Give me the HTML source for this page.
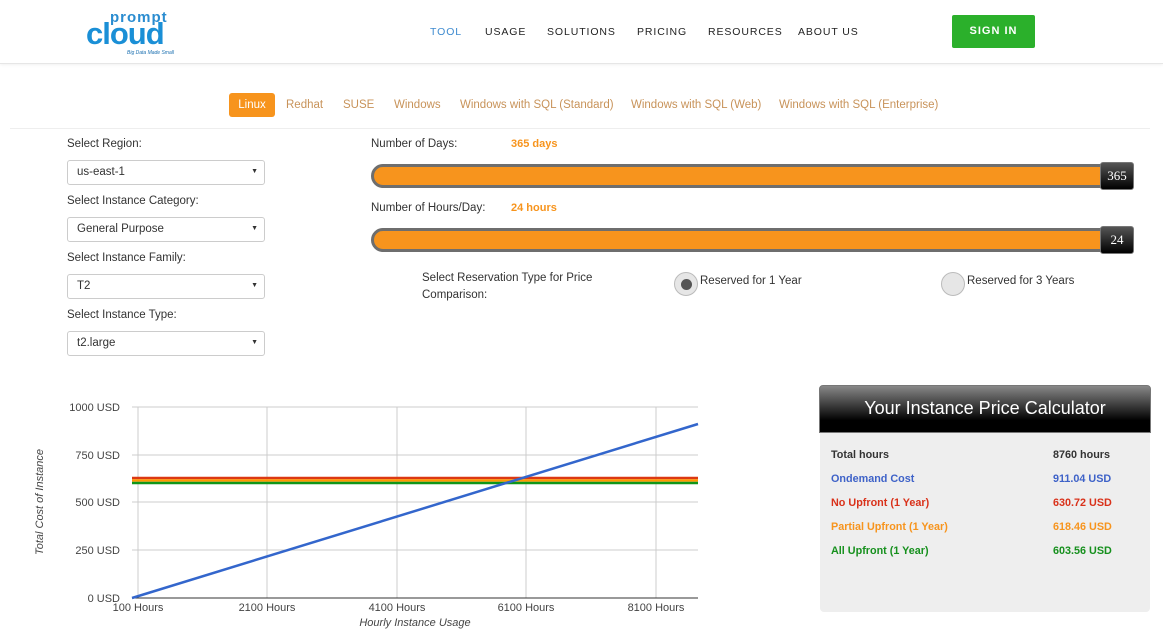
<!DOCTYPE html>
<html><head><meta charset="utf-8"><style>
*{box-sizing:border-box;margin:0;padding:0}
body{width:1163px;height:632px;overflow:hidden;background:#fff;font-family:"Liberation Sans",Arial,sans-serif;position:relative;color:#333}
.a{position:absolute;white-space:nowrap}
.hdr{position:absolute;left:0;top:0;width:1163px;height:64px;border-bottom:1px solid #e6e6e6;box-shadow:0 1px 3px rgba(0,0,0,.06)}
.nav{font-size:10.5px;letter-spacing:0.9px;top:26px;color:#222}
.tab{font-size:11.5px;color:#c8935a;top:99px}
.lbl{font-size:11.5px;color:#333}
.sel{position:absolute;left:67px;width:198px;height:25px;border:1px solid #ccc;border-radius:3px;font-size:11.5px;padding:5px 9px;color:#333}
.sel:after{content:"▼";position:absolute;right:6px;top:7px;font-size:7px;color:#333}
.bar{position:absolute;left:371px;width:733px;height:24px;background:#f7941d;border:3px solid #6e6e6e;border-radius:12px 0 0 12px}
.knob{position:absolute;left:1100px;height:28px;width:34px;background:linear-gradient(#555,#000);border:1px solid #777;border-radius:3px;color:#fff;font-family:"Liberation Serif",serif;font-size:13px;text-align:center;line-height:26px}
.radio{position:absolute;width:24px;height:24px;border-radius:50%;background:#e6e6e6;border:1px solid #bbb}
.row{position:absolute;font-size:10.8px;font-weight:bold}
</style></head><body>
<div class="hdr"></div>
<div class="a" style="left:110px;top:9px;font-size:15px;color:#2a8cd0;font-weight:bold;letter-spacing:1px">prompt</div>
<div class="a" style="left:86px;top:16px;font-size:31px;color:#1a8fd6;font-weight:bold;letter-spacing:-1px">cloud</div>
<div class="a" style="left:127px;top:50px;font-size:5px;color:#1a6fb0;font-style:italic">Big Data Made Small</div>
<div class="a nav" style="left:430px;color:#3e8bd0">TOOL</div>
<div class="a nav" style="left:485px">USAGE</div>
<div class="a nav" style="left:547px">SOLUTIONS</div>
<div class="a nav" style="left:637px">PRICING</div>
<div class="a nav" style="left:708px">RESOURCES</div>
<div class="a nav" style="left:798px">ABOUT US</div>
<div class="a" style="left:952px;top:15px;width:83px;height:33px;background:#2bb02b;border-radius:2px;color:#fff;font-size:11px;font-weight:bold;letter-spacing:1px;text-align:center;line-height:33px">SIGN IN</div>

<div class="a" style="left:229px;top:93px;width:46px;height:24px;background:#f7941d;border-radius:3px;color:#fff;font-size:11.5px;text-align:center;line-height:24px">Linux</div>
<div class="a tab" style="left:286px">Redhat</div>
<div class="a tab" style="left:343px">SUSE</div>
<div class="a tab" style="left:394px">Windows</div>
<div class="a tab" style="left:460px">Windows with SQL (Standard)</div>
<div class="a tab" style="left:631px">Windows with SQL (Web)</div>
<div class="a tab" style="left:779px">Windows with SQL (Enterprise)</div>
<div class="a" style="left:10px;top:128px;width:1140px;border-top:1px solid #eee"></div>

<div class="a lbl" style="left:67px;top:138px">Select Region:</div>
<div class="sel" style="top:160px">us-east-1</div>
<div class="a lbl" style="left:67px;top:195px">Select Instance Category:</div>
<div class="sel" style="top:217px">General Purpose</div>
<div class="a lbl" style="left:67px;top:252px">Select Instance Family:</div>
<div class="sel" style="top:274px">T2</div>
<div class="a lbl" style="left:67px;top:309px">Select Instance Type:</div>
<div class="sel" style="top:331px">t2.large</div>

<div class="a lbl" style="left:371px;top:138px">Number of Days:</div>
<div class="a" style="left:511px;top:138px;font-size:11px;font-weight:bold;color:#f7941d">365 days</div>
<div class="bar" style="top:164px"></div><div class="knob" style="top:162px">365</div>
<div class="a lbl" style="left:371px;top:202px">Number of Hours/Day:</div>
<div class="a" style="left:511px;top:202px;font-size:11px;font-weight:bold;color:#f7941d">24 hours</div>
<div class="bar" style="top:228px"></div><div class="knob" style="top:226px">24</div>
<div class="a lbl" style="left:422px;top:270px;line-height:17px">Select Reservation Type for Price<br>Comparison:</div>
<div class="radio" style="left:674px;top:272px"><div style="position:absolute;left:6px;top:6px;width:11px;height:11px;border-radius:50%;background:#555"></div></div>
<div class="a lbl" style="left:700px;top:275px">Reserved for 1 Year</div>
<div class="radio" style="left:941px;top:272px"></div>
<div class="a lbl" style="left:967px;top:275px">Reserved for 3 Years</div>

<svg class="a" style="left:0;top:390px" width="720" height="242" font-family="Liberation Sans,Arial,sans-serif" font-size="11" fill="#444">
<g stroke="#ccc" stroke-width="1">
<line x1="132" y1="17" x2="698" y2="17"/><line x1="132" y1="65" x2="698" y2="65"/><line x1="132" y1="112" x2="698" y2="112"/><line x1="132" y1="160" x2="698" y2="160"/>
<line x1="138" y1="17" x2="138" y2="208"/><line x1="267" y1="17" x2="267" y2="208"/><line x1="397" y1="17" x2="397" y2="208"/><line x1="526" y1="17" x2="526" y2="208"/><line x1="656" y1="17" x2="656" y2="208"/>
</g>
<line x1="132" y1="208" x2="698" y2="208" stroke="#333"/>
<line x1="132" y1="88" x2="698" y2="88" stroke="#dc3912" stroke-width="2.5"/>
<line x1="132" y1="90.5" x2="698" y2="90.5" stroke="#ff9900" stroke-width="2.5"/>
<line x1="132" y1="93" x2="698" y2="93" stroke="#109618" stroke-width="2.5"/>
<line x1="132" y1="208" x2="698" y2="34" stroke="#3366cc" stroke-width="2.5"/>
<g text-anchor="end"><text x="120" y="21">1000 USD</text><text x="120" y="69">750 USD</text><text x="120" y="116">500 USD</text><text x="120" y="164">250 USD</text><text x="120" y="212">0 USD</text></g>
<g text-anchor="middle"><text x="138" y="221">100 Hours</text><text x="267" y="221">2100 Hours</text><text x="397" y="221">4100 Hours</text><text x="526" y="221">6100 Hours</text><text x="656" y="221">8100 Hours</text>
<text x="415" y="236" font-style="italic">Hourly Instance Usage</text>
<text transform="translate(43,112) rotate(-90)" font-style="italic">Total Cost of Instance</text></g>
</svg>

<div class="a" style="left:820px;top:386px;width:330px;height:226px;background:#eee;border-radius:4px"></div>
<div class="a" style="left:819px;top:385px;width:332px;height:48px;background:linear-gradient(#888,#000 75%);border:1px solid #777;border-radius:4px 4px 0 0;color:#fff;font-size:18px;text-align:center;line-height:44px">Your Instance Price Calculator</div>
<div class="row" style="left:831px;top:449px;color:#333">Total hours</div><div class="row" style="left:1053px;top:449px;color:#333">8760 hours</div>
<div class="row" style="left:831px;top:473px;color:#3e62c8">Ondemand Cost</div><div class="row" style="left:1053px;top:473px;color:#3e62c8">911.04 USD</div>
<div class="row" style="left:831px;top:497px;color:#d9311a">No Upfront (1 Year)</div><div class="row" style="left:1053px;top:497px;color:#d9311a">630.72 USD</div>
<div class="row" style="left:831px;top:521px;color:#f7941d">Partial Upfront (1 Year)</div><div class="row" style="left:1053px;top:521px;color:#f7941d">618.46 USD</div>
<div class="row" style="left:831px;top:545px;color:#16901d">All Upfront (1 Year)</div><div class="row" style="left:1053px;top:545px;color:#16901d">603.56 USD</div>
</body></html>
